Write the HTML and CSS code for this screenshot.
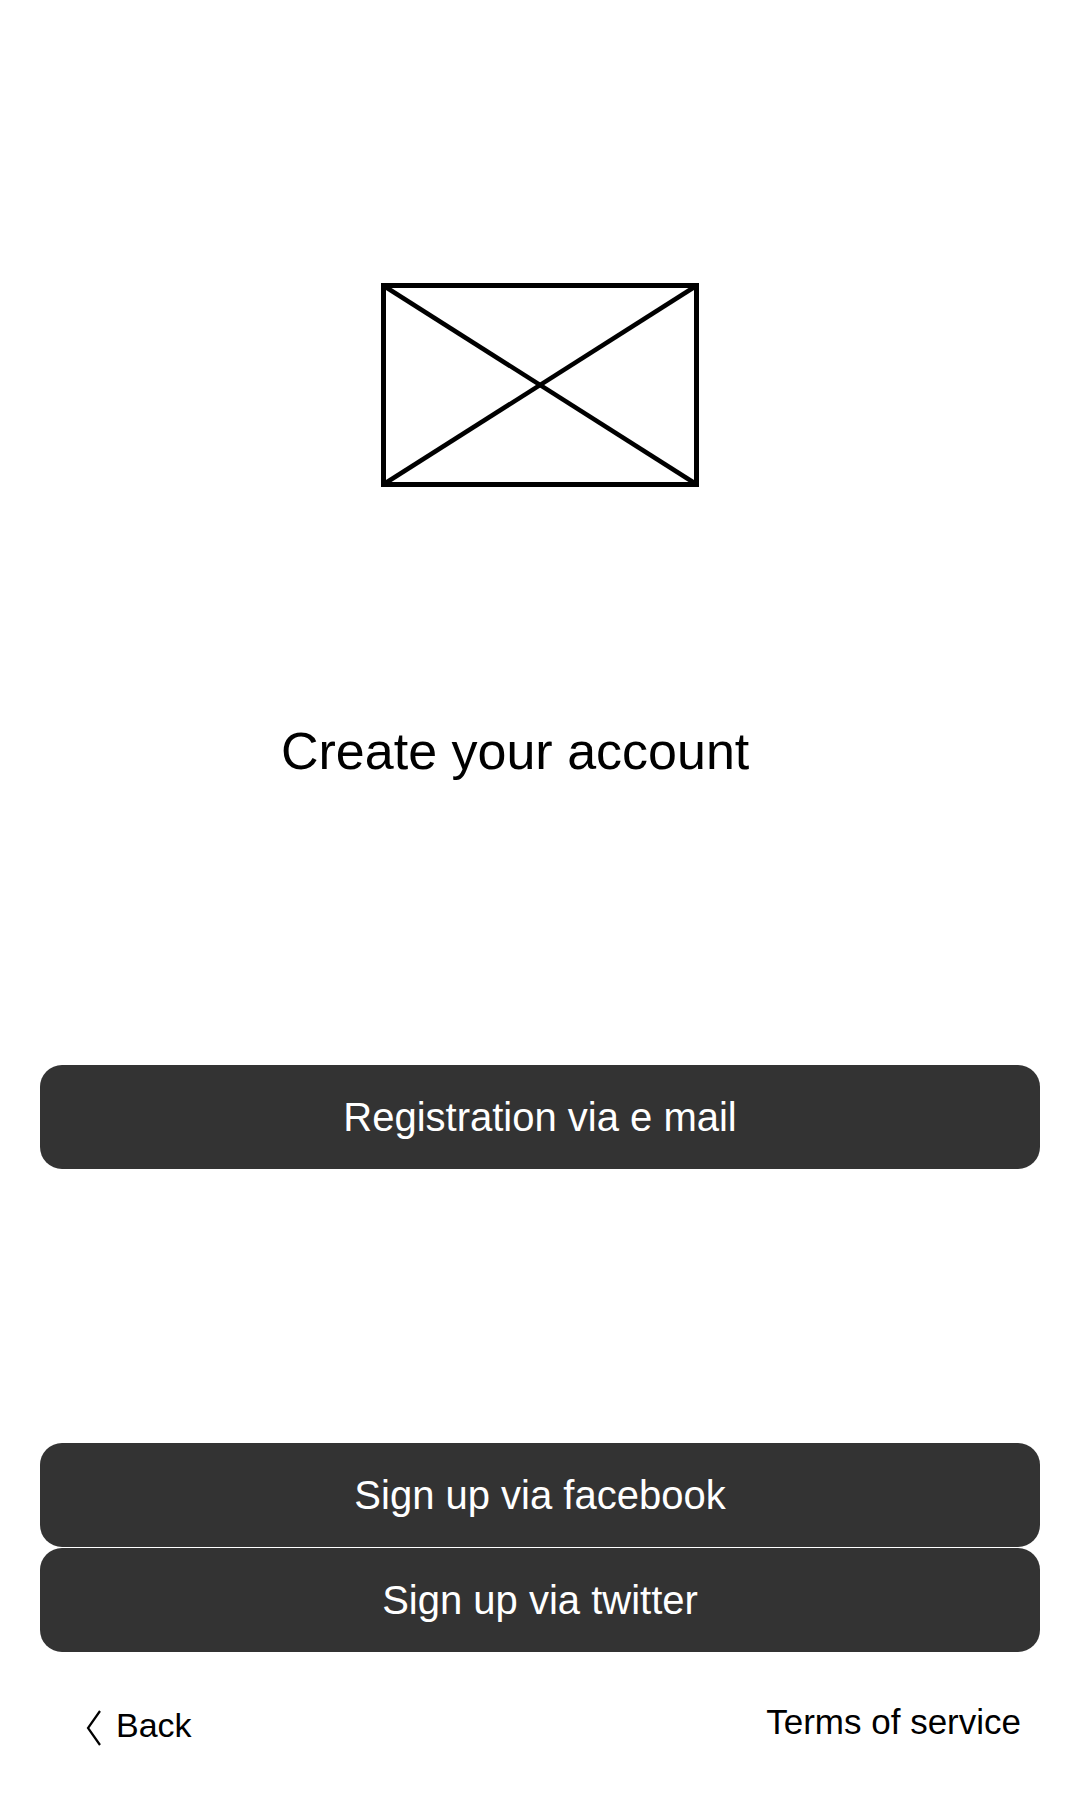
FILE: index.html
```html
<!DOCTYPE html>
<html lang="en">
<head>
<meta charset="utf-8">
<title>Create your account</title>
<link rel="stylesheet" href="styles.css">
</head>
<body>
<div class="screen">
  <div class="hero">
    <svg class="placeholder" width="318" height="204" viewBox="0 0 318 204">
      <rect x="2.5" y="2.5" width="313" height="199" fill="none" stroke="#000" stroke-width="5"/>
      <line x1="3" y1="3" x2="315" y2="201" stroke="#000" stroke-width="4.5"/>
      <line x1="315" y1="3" x2="3" y2="201" stroke="#000" stroke-width="4.5"/>
    </svg>
  </div>
  <h1 class="title">Create your account</h1>
  <button class="btn btn-email">Registration via e mail</button>
  <div class="social">
    <button class="btn">Sign up via facebook</button>
    <button class="btn">Sign up via twitter</button>
  </div>
  <div class="footer">
    <a class="back" href="#">
      <svg class="chev" width="16" height="36" viewBox="0 0 16 36">
        <polyline points="14,1 2,18 14,35" fill="none" stroke="#000" stroke-width="2.2"/>
      </svg>
      <span>Back</span>
    </a>
    <a class="terms" href="#">Terms of service</a>
  </div>
</div>
</body>
</html>
```

FILE: styles.css
```css
html, body {
  margin: 0;
  padding: 0;
  background: #fff;
}
body {
  font-family: "Liberation Sans", Arial, sans-serif;
  color: #000;
}
.screen {
  width: 1080px;
  min-height: 1800px;
  display: flex;
  flex-direction: column;
}
.hero {
  display: flex;
  justify-content: center;
  padding-top: 283px;
}
.placeholder {
  display: block;
}
.title {
  margin: 234px 0 0 0;
  padding-left: 281px;
  font-size: 52px;
  font-weight: normal;
  line-height: 60px;
}
.btn {
  display: flex;
  align-items: center;
  justify-content: center;
  width: 1000px;
  height: 104px;
  margin: 0 40px;
  padding: 0;
  border: none;
  border-radius: 22px;
  background: #333333;
  color: #fff;
  font-family: "Liberation Sans", Arial, sans-serif;
  font-size: 40px;
}
.btn-email {
  margin-top: 284px;
}
.social {
  margin-top: 274px;
  display: flex;
  flex-direction: column;
  gap: 1px;
}
.footer {
  margin-top: 50px;
  display: flex;
  justify-content: space-between;
  align-items: flex-start;
  padding: 0 59px 0 86px;
}
.back {
  display: flex;
  align-items: center;
  gap: 14px;
  margin-top: 2px;
  color: #000;
  text-decoration: none;
  font-size: 34px;
  line-height: 40px;
}
.chev {
  display: block;
  margin-top: 6px;
}
.terms {
  color: #000;
  text-decoration: none;
  font-size: 35px;
  line-height: 40px;
}
```
